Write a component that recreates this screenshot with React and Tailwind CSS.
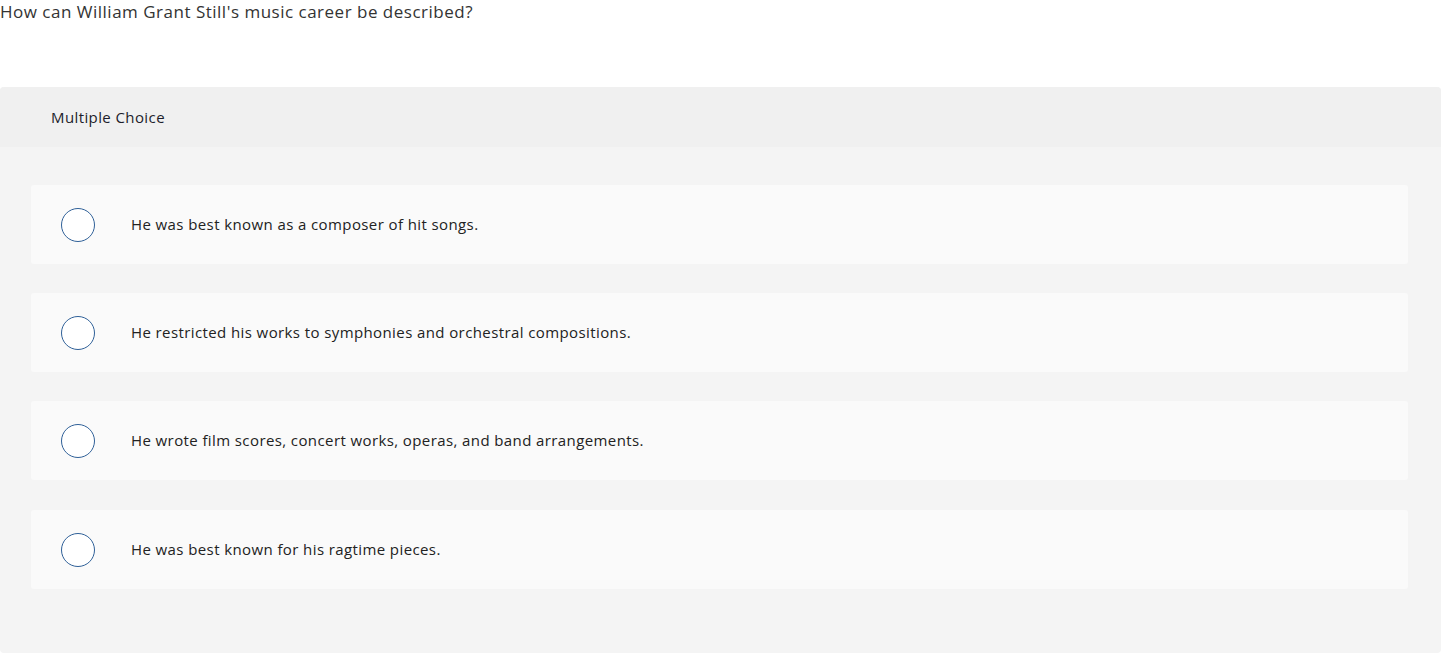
import React from 'react';

const options = [
  'He was best known as a composer of hit songs.',
  'He restricted his works to symphonies and orchestral compositions.',
  'He wrote film scores, concert works, operas, and band arrangements.',
  'He was best known for his ragtime pieces.',
];

export default function App() {
  return (
    <div className="min-h-screen bg-white font-['Open_Sans',sans-serif] pr-[5px]">
      {/* Question */}
      <p className="text-[17px] tracking-[0.5px] leading-[24px] text-[#333333] h-[87px]">
        How can William Grant Still's music career be described?
      </p>

      {/* Panel */}
      <div className="bg-[#f4f4f4] rounded-[4px] overflow-hidden">
        <div className="bg-[#f0f0f0] h-[60px] flex items-center pl-[51px]">
          <span className="text-[15px] tracking-[0.4px] text-[#1d1d2b]">Multiple Choice</span>
        </div>

        <div className="px-[31px] pt-[38px] pb-[64px] pr-[33px] flex flex-col gap-[29px]">
          {options.map((text, i) => (
            <div
              key={i}
              className="bg-[#fafafa] rounded-[3px] h-[79px] flex items-center pl-[30px] last:mt-[1px]"
            >
              <span className="w-[34px] h-[34px] rounded-full border-[1.3px] border-[#2f6098] bg-white shrink-0" />
              <span className="ml-[36px] text-[15px] tracking-[0.4px] text-[#222222]">{text}</span>
            </div>
          ))}
        </div>
      </div>
    </div>
  );
}
